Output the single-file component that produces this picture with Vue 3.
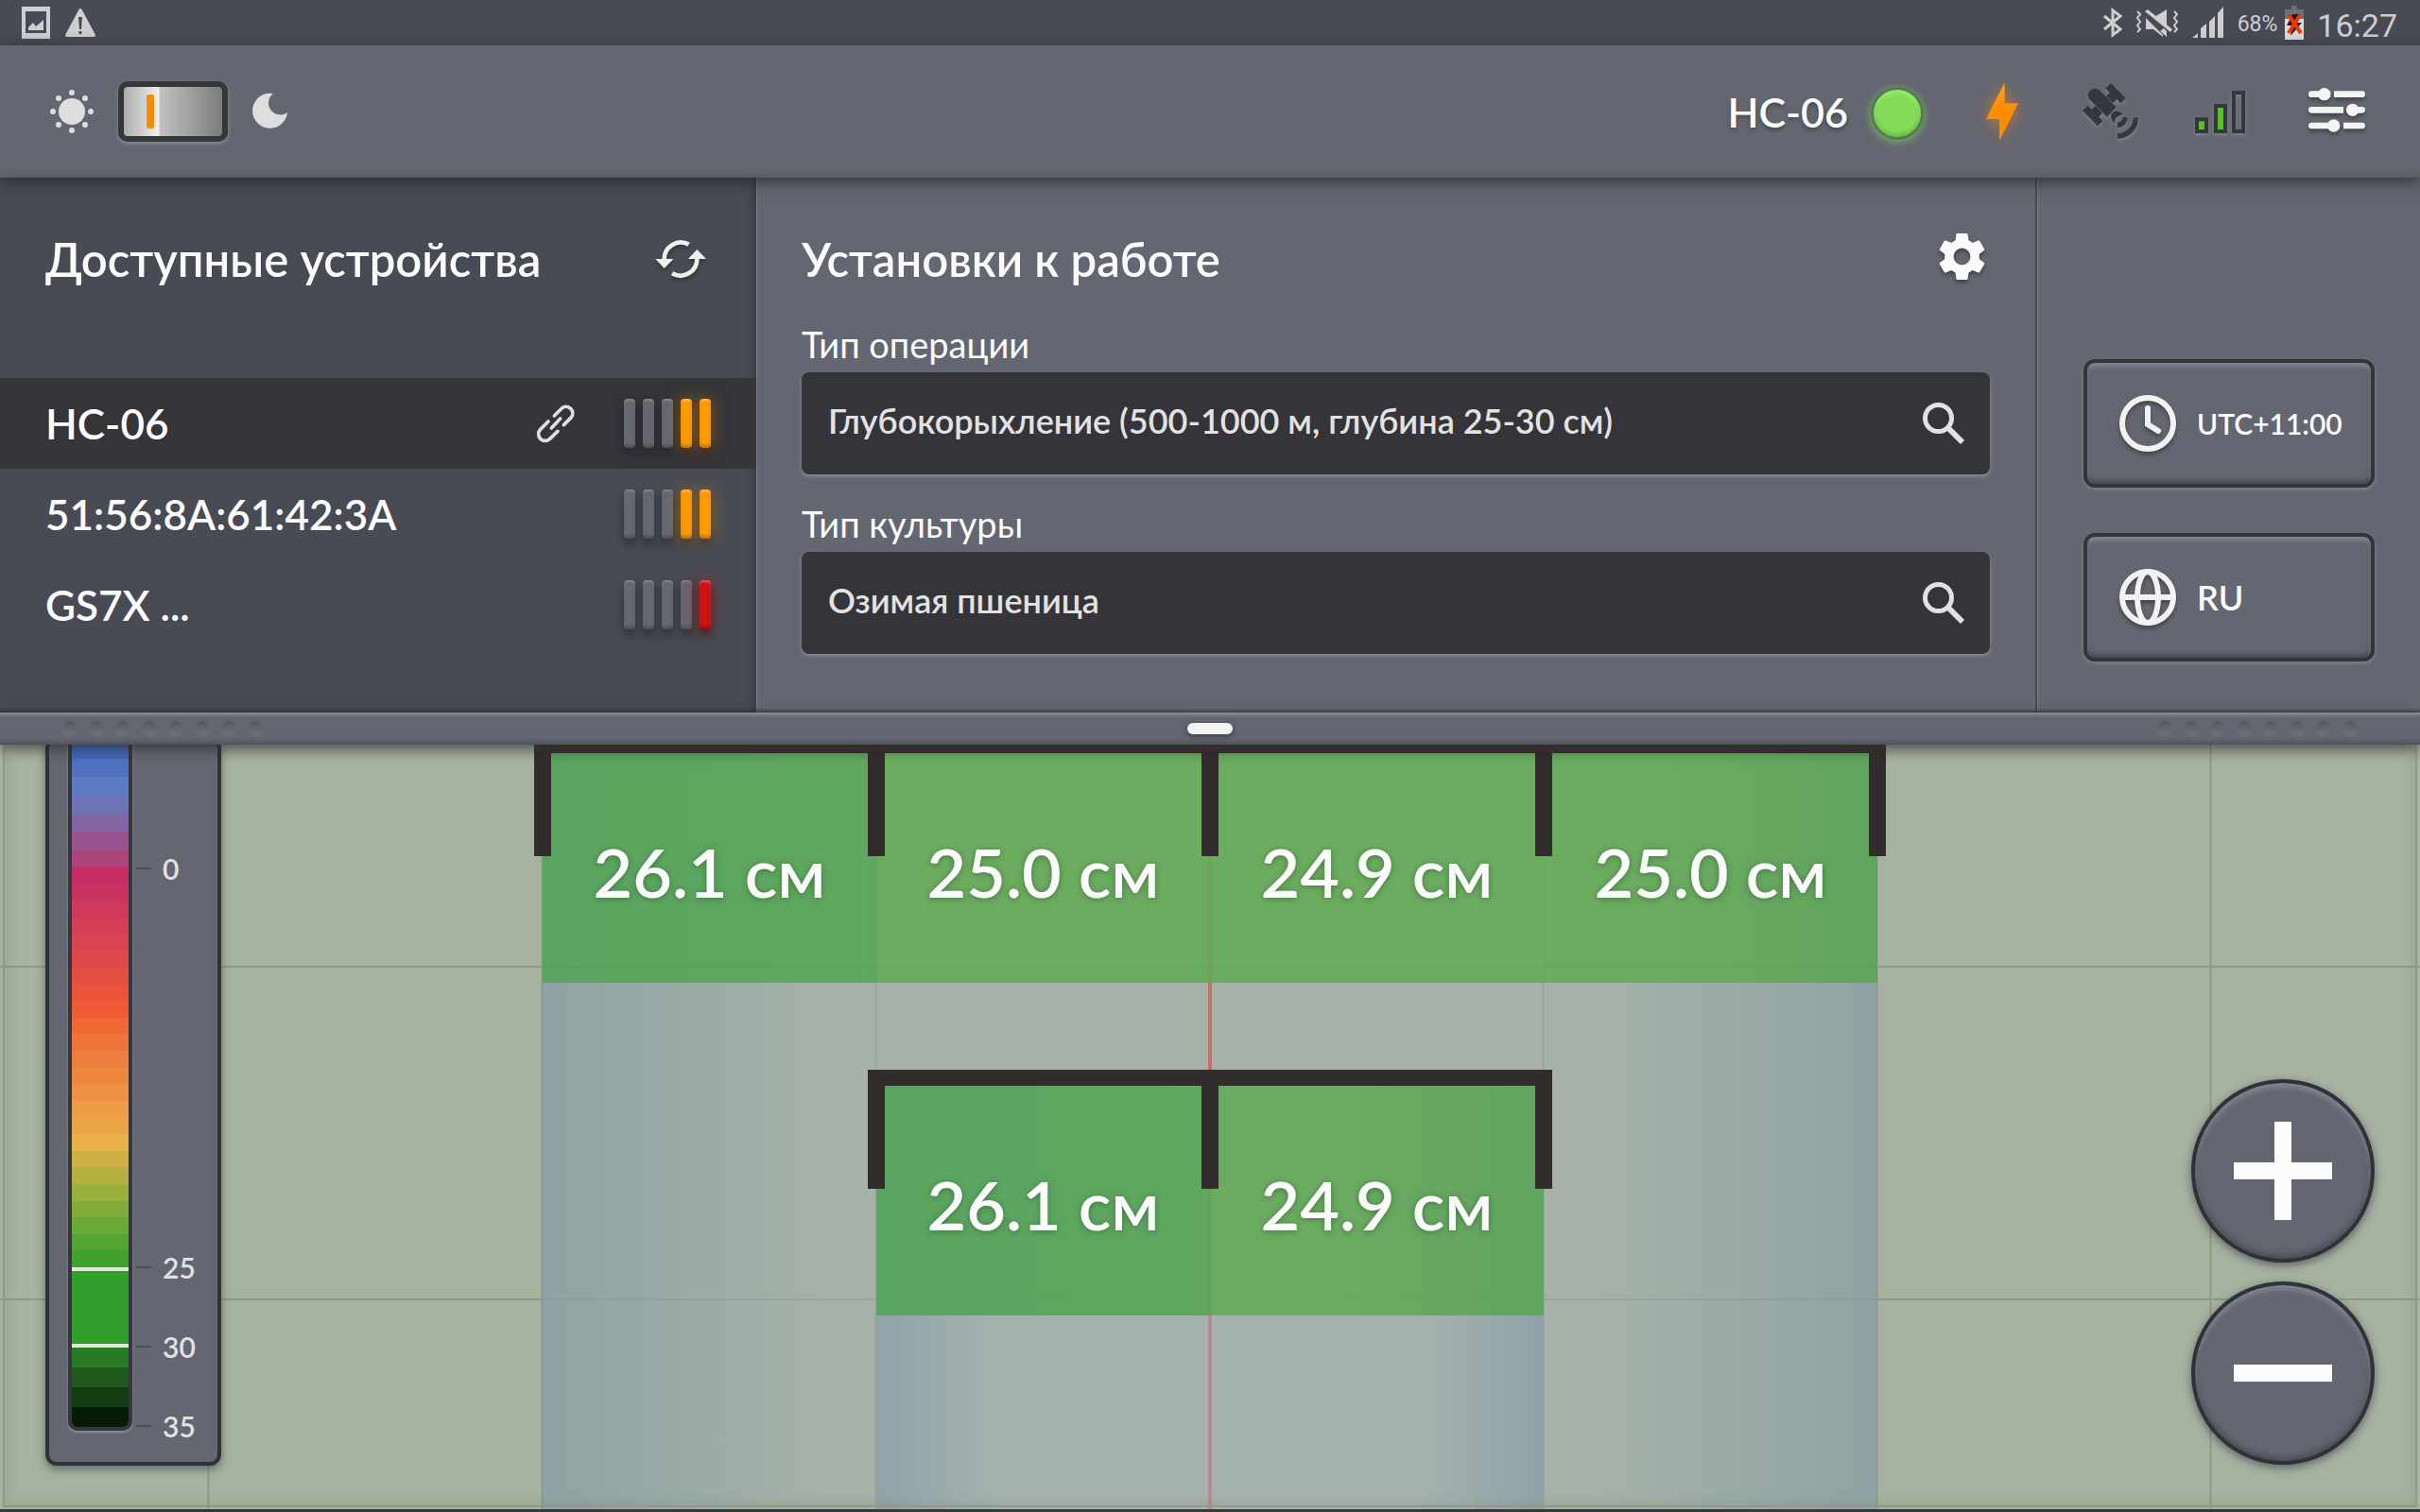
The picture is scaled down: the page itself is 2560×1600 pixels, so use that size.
<script setup>
import { ref } from 'vue'

const night = ref(false)
const operation = ref('Глубокорыхление (500-1000 м, глубина 25-30 см)')
const culture = ref('Озимая пшеница')

const devices = [
  { name: 'HC-06', linked: true, bars: ['', '', '', 'warn', 'warn'] },
  { name: '51:56:8A:61:42:3A', linked: false, bars: ['', '', '', 'warn', 'warn'] },
  { name: 'GS7X ...', linked: false, bars: ['', '', '', '', 'bad'] }
]

const frontRow = [
  { value: '26.1 см', tone: 'deep' },
  { value: '25.0 см', tone: 'norm' },
  { value: '24.9 см', tone: 'norm' },
  { value: '25.0 см', tone: 'edge' }
]
const rearRow = [
  { value: '26.1 см', tone: 'deep' },
  { value: '24.9 см', tone: 'edge' }
]

const above = ['#4467b8', '#5070c2', '#5b7ac3', '#6b74b6', '#8265a4', '#97548f', '#ac4379']
const shallow = [
  '#c62d63', '#ca325f', '#cf395a', '#d53e56', '#da4350', '#e0464a', '#e64d42', '#ec5338',
  '#f25a33', '#f26736', '#f0723a', '#ef7d3d', '#ef883f', '#ec9242', '#ec9d45', '#eaa646',
  '#e9b148', '#cdb144', '#b3b040', '#99af3d', '#81ac3a', '#69a936', '#54a533', '#40a030'
]
const over = ['#277a24', '#1f5a1c', '#133b12', '#051b05']
</script>

<template>
  <div class="app">
    <div class="status">
      <div class="status-group">
        <svg class="ic-shot" viewBox="0 0 30 34"><path fill="#cfcfd1" fill-rule="evenodd" d="M0 0h30v34H0zM4 5v23h22V5z" /><path fill="#cfcfd1" d="M7 25v-3l5-5 3 4 8-7v11z" /></svg>
        <svg class="ic-warn" viewBox="0 0 32 30"><path fill="#cfcfd1" fill-rule="evenodd" d="M14.500 1q1.500-2 3 0L32 28q0 2-2 2H2q-2 0-2-2zM14 9l1 13h2l1-13zM14.500 24v3h3v-3z" /></svg>
      </div>
      <div class="status-group right">
        <svg class="ic-bt" viewBox="0 0 20 30"><path fill="none" stroke="#cfcfd1" stroke-width="3" d="M1 8l17 14-8 6V2l8 6L1 22" /></svg>
        <svg class="ic-mute" viewBox="0 0 46 30"><g fill="#cfcfd1"><path d="M11 10l18 18v2l-10-8h-8z" /><path d="M33 1v19L20 9z" /><path d="M10 3l3-2 26 21-2 3z" /><path d="M26 24l7 6v-6l-3-3z" /></g><path fill="none" stroke="#cfcfd1" stroke-width="2" d="M2 3l3 3-3 4 3 4-3 4 3 4-3 3M41 3l3 3-3 4 3 4-3 4 3 4-3 3" /></svg>
        <svg class="ic-sig" viewBox="0 0 34 34"><path fill="#cfcfd1" d="M0 33l6-5v5zM9 33V23l6-5v15zM18 33V16l6-6v23zM27 33V7l6-7v33z" /></svg>
        <div class="battery">
          <span class="pct">68%</span>
          <svg class="ic-bat" viewBox="0 0 20 36"><path fill="#6f7076" d="M0 4h7V0h6v4h7v12H0z" /><path fill="#dcdcde" d="M0 14h20v22H0z" /><path fill="#1d1d20" d="M8 9h8l-4 9h6L6 32l3-11H2z" /><path stroke="#f23505" stroke-width="4" d="M4 10l13 19M16 10L4 29" /></svg>
        </div>
        <span class="clock">16:27</span>
      </div>
    </div>

    <header class="top">
      <div class="mode">
        <svg class="ic-sun" viewBox="0 0 46 46" fill="#dededf"><circle cx="23" cy="23" r="14" /><circle cx="23" cy="3" r="3" /><circle cx="23" cy="43" r="3" /><circle cx="3" cy="23" r="3" /><circle cx="43" cy="23" r="3" /><circle cx="9" cy="9" r="3" /><circle cx="37" cy="9" r="3" /><circle cx="9" cy="37" r="3" /><circle cx="37" cy="37" r="3" /></svg>
        <input v-model="night" class="switch" type="checkbox" role="switch" aria-label="Ночной режим">
        <svg class="ic-moon" viewBox="0 0 38 38"><path fill="#dededf" d="M22 0A18.500 18.500 0 1 0 37 20A10.500 10.500 0 0 1 22 0Z" /></svg>
      </div>
      <div class="tools">
        <div class="current">HC-06<i class="lamp"></i></div>
        <div class="icons">
          <svg class="hi bolt" viewBox="84 54 180 180"><defs><linearGradient id="gb" x1="0" y1="0" x2="0" y2="1"><stop offset="0" stop-color="#ffa01f" /><stop offset=".5" stop-color="#ff8c00" /></linearGradient></defs><path fill="url(#gb)" d="M182 52v66h43l-60 119v-69h-42z" /></svg>
          <svg class="hi sunk" viewBox="438 54 180 180"><g fill="#36373c"><path d="M450 104Q440 88 454 77Q468 65 482 76L536 130L507 161Z" /><path d="M519 54L566 101L551 118L538 105L526 117L503 96L515 84L502 70Z" /><path d="M445 125L458 138L470 125L492 149L480 161L493 174L477 190L429 142Z" /><path d="M530 143Q547 140 556 152L536 163L528 180Q515 165 521 150Z" /></g><path fill="none" stroke="#36373c" stroke-width="16" d="M564 163A24 24 0 0 1 540 187M598 163A58 58 0 0 1 540 222" /></svg>
          <svg class="hi sunk" viewBox="792 54 180 180"><path fill="#56c222" d="M798 175h18v27h-18zM858 132h18v70h-18z" /><path fill="none" stroke="#36373c" stroke-width="12" d="M792 169h30v38h-30zM852 126h30v81h-30zM909 84h30v123h-30z" /></svg>
          <button class="ibtn" aria-label="Меню"><svg class="hi raised" viewBox="1146 54 180 180"><g fill="#f4f4f4"><path d="M1156 79h60v20h-60a10 10 0 0 1 0-20zM1227 79h89a10 10 0 0 1 0 20h-89zM1156 129h101v20h-101a10 10 0 0 1 0-20zM1286 129h30a10 10 0 0 1 0 20h-30zM1156 179h70v20h-70a10 10 0 0 1 0-20zM1257 179h59a10 10 0 0 1 0 20h-59z" /><circle cx="1196" cy="89" r="20" /><circle cx="1286" cy="139" r="20" /><circle cx="1226" cy="189" r="20" /></g></svg></button>
        </div>
      </div>
    </header>

    <main class="panel">
      <section class="devices">
        <div class="head">
          <h2>Доступные устройства</h2>
          <button class="ibtn" aria-label="Обновить"><svg class="ic-refresh raised" viewBox="396 70 168 124"><g fill="none" stroke="#efefef" stroke-width="14"><path d="M428 134A53 53 0 0 1 506 86" /><path d="M532 130A53 53 0 0 1 453 178" /></g><path fill="#efefef" d="M400 132h57l-29 30zM504 132h57l-29-30z" /></svg></button>
        </div>
        <ul>
          <li v-for="d in devices" :key="d.name" :class="{ active: d.linked }">
            <span class="dname">{{ d.name }}</span>
            <svg v-if="d.linked" class="ic-link" viewBox="24 594 120 120"><path fill="none" stroke="#dfdfe0" stroke-width="11" stroke-linecap="round" d="M79 630L103 606A21 21 0 0 1 133 635L109 659M60 648L35 673A21 21 0 0 0 65 703L90 679M70 669L98 639" /></svg>
            <span class="level"><i v-for="(b, i) in d.bars" :key="i" :class="b"></i></span>
          </li>
        </ul>
      </section>

      <section class="setup">
        <div class="head">
          <h2>Установки к работе</h2>
          <button class="ibtn" aria-label="Настройки"><svg class="ic-gear raised" viewBox="2 2 20 20"><path fill="#fbfbfb" d="M19.140 12.940c.04-.3.06-.61.06-.94 0-.32-.02-.64-.07-.94l2.030-1.580a.49.49 0 0 0 .12-.61l-1.920-3.320a.49.49 0 0 0-.59-.22l-2.390.96c-.5-.38-1.030-.7-1.620-.94l-.36-2.540a.48.48 0 0 0-.48-.41h-3.840c-.24 0-.43.17-.47.41l-.36 2.540c-.59.24-1.130.57-1.620.94l-2.390-.96c-.22-.08-.47 0-.59.22L2.740 8.870c-.12.21-.08.47.12.61l2.030 1.580c-.05.3-.09.63-.09.94s.02.64.07.94l-2.030 1.580a.49.49 0 0 0-.12.61l1.920 3.320c.12.22.37.29.59.22l2.390-.96c.5.38 1.030.7 1.620.94l.36 2.540c.05.24.24.41.48.41h3.840c.24 0 .44-.17.47-.41l.36-2.540c.59-.24 1.130-.56 1.620-.94l2.390.96c.22.08.47 0 .59-.22l1.920-3.320c.12-.22.07-.47-.12-.61zM12 15.500A3.500 3.500 0 1 1 12 8.500a3.500 3.500 0 0 1 0 7z" /></svg></button>
        </div>
        <div class="field">
          <label for="operation">Тип операции</label>
          <div class="box">
            <input id="operation" v-model="operation" type="text">
            <button class="ibtn" aria-label="Найти операцию"><svg class="ic-search" viewBox="0 0 44 44"><g fill="none" stroke="#e2e2e3" stroke-width="5"><circle cx="16.500" cy="16.500" r="14" /><path d="M27 27l15 15" stroke-width="6" /></g></svg></button>
          </div>
        </div>
        <div class="field">
          <label for="culture">Тип культуры</label>
          <div class="box">
            <input id="culture" v-model="culture" type="text">
            <button class="ibtn" aria-label="Найти культуру"><svg class="ic-search" viewBox="0 0 44 44"><g fill="none" stroke="#e2e2e3" stroke-width="5"><circle cx="16.500" cy="16.500" r="14" /><path d="M27 27l15 15" stroke-width="6" /></g></svg></button>
          </div>
        </div>
      </section>

      <section class="locale">
        <button class="key"><svg class="ic-key raised" viewBox="0 0 60 60" fill="none" stroke="#f2f2f2" stroke-width="6"><circle cx="30" cy="30" r="27" /><path d="M30 14v17l11 7" stroke-linecap="round" /></svg><span>UTC+11:00</span></button>
        <button class="key"><svg class="ic-key raised" viewBox="0 0 60 60" fill="none" stroke="#f2f2f2" stroke-width="6"><circle cx="30" cy="30" r="27" /><ellipse cx="30" cy="30" rx="11" ry="27" /><path d="M3 30h54" /></svg><span class="lang">RU</span></button>
      </section>
    </main>

    <div class="drawer">
      <span class="dots"><i v-for="n in 8" :key="n"></i></span>
      <button class="handle" aria-label="Свернуть панель"></button>
      <span class="dots"><i v-for="n in 8" :key="n"></i></span>
    </div>

    <div class="map">
      <div class="trail wide"></div>
      <div class="axis"></div>
      <div class="trail narrow"></div>
      <div class="tool front">
        <div v-for="(c, i) in frontRow" :key="i" class="cell" :class="c.tone"><b>{{ c.value }}</b></div>
      </div>
      <div class="tool rear">
        <div v-for="(c, i) in rearRow" :key="i" class="cell" :class="c.tone"><b>{{ c.value }}</b></div>
      </div>

      <aside class="legend">
        <div class="scale">
          <div class="band above"><i v-for="c in above" :key="c" :style="{ background: c }"></i></div>
          <div class="band shallow"><i v-for="c in shallow" :key="c" :style="{ background: c }"></i></div>
          <div class="band target"></div>
          <div class="band over"><i v-for="c in over" :key="c" :style="{ background: c }"></i></div>
        </div>
        <div class="marks">
          <span class="zero">0</span><span>25</span><span>30</span><span>35</span>
        </div>
      </aside>

      <div class="zoom">
        <button aria-label="Приблизить"><svg viewBox="0 0 104 104"><path fill="#fcfcfc" d="M43 0h18v43h43v18H61v43H43V61H0V43h43z" /></svg></button>
        <button aria-label="Отдалить"><svg viewBox="0 0 104 104"><path fill="#fcfcfc" d="M0 43h104v18H0z" /></svg></button>
      </div>
    </div>
  </div>
</template>

<style>
body {
  margin: 0;
  background: #484b53;
}
</style>

<style scoped>
.app {
  display: flex;
  flex-direction: column;
  min-height: 100vh;
  background: #484b53;
  color: #fcfcfc;
  font-family: Lato, "Noto Sans", sans-serif;
  font-weight: 600;
}
.app * {
  box-sizing: border-box;
}
svg {
  display: block;
  flex: none;
  overflow: visible;
}
button,
input {
  font: inherit;
  color: inherit;
  border: 0;
  background: none;
  padding: 0;
  margin: 0;
}
.ibtn {
  flex: none;
}
.raised {
  filter: drop-shadow(0 3px 2px rgba(30, 31, 36, 0.5));
}

.status {
  display: flex;
  justify-content: space-between;
  height: 48px;
  padding: 0 24px 0 23px;
  background: #484b53;
  color: #cfcfd1;
  font-family: Roboto, sans-serif;
  font-weight: 400;
}
.status-group {
  display: flex;
  align-items: center;
  gap: 16px;
}
.status-group.right {
  gap: 14px;
}
.battery {
  display: flex;
  align-items: center;
  gap: 8px;
}
.ic-shot { width: 30px; height: 34px; }
.ic-warn { width: 32px; height: 30px; }
.ic-bt { width: 20px; height: 30px; }
.ic-mute { width: 46px; height: 30px; }
.ic-sig { width: 34px; height: 34px; }
.ic-bat { width: 20px; height: 36px; }
.pct {
  font-size: 23px;
  padding-top: 3px;
}
.clock {
  font-size: 34px;
  padding-top: 6px;
}

.top {
  display: flex;
  justify-content: space-between;
  align-items: center;
  height: 140px;
  padding: 0 58px 0 53px;
  background: linear-gradient(#646671 132px, #5a5c66);
  box-shadow: 0 4px 16px rgba(36, 37, 40, 0.8);
  position: relative;
  z-index: 2;
}
.mode {
  display: flex;
  align-items: center;
  gap: 26px;
}
.ic-sun { width: 46px; height: 46px; }
.ic-moon { width: 38px; height: 38px; }
.switch {
  appearance: none;
  display: flex;
  align-items: center;
  width: 116px;
  height: 64px;
  padding-left: 24px;
  border: 6px solid #36373c;
  border-radius: 10px;
  background: linear-gradient(90deg, #acacac, #efefef 37px, #c2c2c2 38px, #7c7c7c 100%);
  box-shadow: 0 2px 4px rgba(150, 152, 166, 0.8);
}
.switch::before {
  content: "";
  width: 8px;
  height: 36px;
  border-radius: 2px;
  background: #ff8a00;
}
.tools {
  display: flex;
  align-items: center;
  gap: 53px;
}
.current {
  display: flex;
  align-items: center;
  gap: 24px;
  font-size: 43px;
  text-shadow: 0 3px 4px rgba(40, 41, 48, 0.5);
}
.lamp {
  width: 56px;
  height: 56px;
  margin-top: 4px;
  border: 3px solid #567a52;
  border-radius: 50%;
  background: #82dc57;
  box-shadow: 0 2px 10px rgba(130, 220, 100, 0.7), inset 0 3px 4px rgba(170, 245, 130, 0.7), inset 0 -2px 4px rgba(70, 150, 40, 0.6);
}
.icons {
  display: flex;
  gap: 58px;
}
.hi {
  width: 60px;
  height: 60px;
}
.bolt {
  filter: drop-shadow(0 0 8px rgba(255, 140, 0, 0.6));
}
.sunk {
  filter: drop-shadow(0 2px 2px rgba(150, 152, 166, 0.6));
}

.panel {
  display: grid;
  grid-template-columns: minmax(0, 800fr) minmax(0, 1355fr) minmax(0, 405fr);
  min-height: 566px;
  background: #646671;
}
.head {
  display: flex;
  justify-content: space-between;
  align-items: center;
  height: 64px;
}
h2 {
  margin: 0;
  font-size: 49px;
  line-height: 64px;
  font-weight: 600;
}
.devices {
  padding-top: 54px;
  background: #484b53;
  box-shadow: inset -6px 0 8px -4px rgba(40, 41, 46, 0.6);
}
.devices .head {
  padding: 0 52px 0 48px;
  margin-bottom: 94px;
}
.ic-refresh { width: 56px; height: 42px; }
ul {
  list-style: none;
  margin: 0;
  padding: 0;
}
li {
  display: flex;
  align-items: center;
  height: 96px;
  padding: 0 48px;
  font-size: 44px;
}
li.active {
  background: #343439;
}
.dname { flex: 1; }
.ic-link {
  width: 40px;
  height: 40px;
  margin-right: 52px;
}
.level {
  display: flex;
  gap: 8px;
}
.level i {
  width: 12px;
  height: 52px;
  border-radius: 4px;
  background: #656772;
  box-shadow: 0 6px 10px rgba(30, 30, 34, 0.6), inset 0 2px 2px rgba(255, 255, 255, 0.2), inset 0 -3px 3px rgba(0, 0, 0, 0.2);
}
.level .warn {
  background: #ff9a00;
  box-shadow: 0 0 18px rgba(255, 154, 0, 0.5), 0 6px 8px rgba(40, 25, 0, 0.5), inset 0 2px 2px rgba(255, 255, 255, 0.3), inset 0 -3px 3px rgba(120, 60, 0, 0.4);
}
.level .bad {
  background: #d01013;
  box-shadow: 0 0 18px rgba(208, 16, 19, 0.6), 0 6px 8px rgba(40, 0, 0, 0.5), inset 0 2px 2px rgba(255, 255, 255, 0.3), inset 0 -3px 3px rgba(80, 0, 0, 0.4);
}

.setup {
  padding: 54px 48px 0 47px;
  border-left: 1px solid #7a7c87;
  border-right: 2px solid #45474f;
}
.setup .head {
  margin-bottom: 34px;
  padding-right: 4px;
}
.ic-gear {
  width: 51px;
  height: 51px;
  margin-bottom: 5px;
}
.field {
  margin-bottom: 28px;
}
label {
  display: block;
  margin-bottom: 6px;
  font-size: 38px;
  line-height: 48px;
  font-weight: 400;
}
.box {
  display: flex;
  align-items: center;
  height: 108px;
  padding: 0 27px 0 28px;
  border-radius: 8px;
  background: #343439;
  box-shadow: 0 2px 4px rgba(150, 152, 166, 0.8);
}
.box input {
  flex: 1;
  min-width: 0;
  padding-bottom: 6px;
  font-size: 36px;
  color: #e2e2e3;
}
.ic-search { width: 44px; height: 44px; }

.locale {
  display: flex;
  flex-direction: column;
  justify-content: flex-end;
  gap: 48px;
  padding: 0 48px 54px;
  border-left: 1px solid #7a7c87;
}
.key {
  display: flex;
  align-items: center;
  gap: 22px;
  height: 136px;
  padding: 0 32px 0 34px;
  border: 4px solid #343439;
  border-radius: 12px;
  font-size: 30px;
  box-shadow: 0 2px 4px rgba(150, 152, 166, 0.6), inset 0 4px 4px rgba(150, 150, 168, 0.6), inset 0 -4px 5px rgba(50, 52, 60, 0.5);
}
.ic-key { width: 60px; height: 60px; }
.lang { font-size: 36px; }

.drawer {
  display: flex;
  justify-content: space-between;
  align-items: center;
  height: 34px;
  padding: 0 66px;
  background: linear-gradient(#8d8f99, #646671 5px, #646671 27px, #50525b);
  box-shadow: 0 -2px 3px rgba(40, 41, 46, 0.7), 0 6px 14px rgba(40, 41, 40, 0.6);
  position: relative;
  z-index: 2;
}
.dots {
  display: flex;
  gap: 12px;
}
.dots i {
  width: 16px;
  height: 16px;
  border-radius: 50%;
  background: linear-gradient(#555761, #70727d);
}
.handle {
  width: 48px;
  height: 12px;
  border-radius: 6px;
  background: #f2f2f2;
  box-shadow: 0 2px 6px rgba(30, 30, 36, 0.6);
}

/* Field canvas: 353 x 352 grid centred on the machine axis */
.map {
  flex: 1;
  position: relative;
  overflow: hidden;
  min-height: 812px;
  border-bottom: 3px solid #36393f;
  background:
    linear-gradient(90deg, #8e9b80 2px, transparent 2px) calc(50% + 175px) 0 / 353px 100%,
    linear-gradient(#8e9b80 2px, transparent 2px) 0 234px / 100% 352px,
    #a7b2a0;
}
.map::after {
  content: "";
  position: absolute;
  inset: 0 3px 2px;
  border: solid #8e9b80;
  border-width: 0 2px 2px;
  box-shadow: inset 0 0 14px rgba(110, 125, 105, 0.3);
  pointer-events: none;
}
.axis {
  position: absolute;
  inset: 0 auto 0 50%;
  width: 4px;
  margin-left: -2px;
  background: #c56d6e;
}
.tool {
  position: absolute;
  left: 50%;
  display: flex;
  height: 260px;
  transform: translateX(-50%);
}
.front { top: -8px; }
.rear { top: 344px; }
.cell {
  position: relative;
  display: flex;
  justify-content: center;
  width: 353px;
  padding-top: 83px;
  border-top: 17px solid #322d2d;
}
.cell::before,
.cell:last-child::after {
  content: "";
  position: absolute;
  left: -9px;
  top: -17px;
  width: 18px;
  height: 126px;
  background: #322d2d;
  z-index: 1;
}
.cell:last-child::after {
  left: auto;
  right: -9px;
}
.cell b {
  font-size: 72px;
  line-height: 84px;
  font-weight: 600;
  text-shadow: 0 1px 6px rgba(30, 70, 30, 0.5);
}
.deep { background: linear-gradient(90deg, rgba(76, 162, 84, 0.85), rgba(84, 166, 84, 0.85)); }
.norm { background: rgba(97, 170, 85, 0.85); }
.edge { background: linear-gradient(90deg, rgba(97, 170, 85, 0.85) 35%, rgba(85, 162, 84, 0.85)); }
.trail {
  position: absolute;
  left: 50%;
  bottom: 0;
  transform: translateX(-50%);
}
.wide {
  top: 252px;
  width: 1412px;
  background: linear-gradient(90deg, rgba(134, 158, 166, 0.75), rgba(165, 177, 177, 0.5) 21%, rgba(165, 177, 177, 0.5) 79%, rgba(134, 158, 166, 0.75));
}
.narrow {
  top: 604px;
  width: 706px;
  background: linear-gradient(90deg, rgba(132, 155, 171, 0.65), rgba(162, 179, 182, 0.45) 18%, rgba(162, 179, 182, 0.45) 82%, rgba(132, 155, 171, 0.65));
}

.legend {
  position: absolute;
  left: 48px;
  top: -8px;
  z-index: 1;
  display: flex;
  align-items: flex-start;
  gap: 4px;
  width: 186px;
  padding: 0 20px 20px;
  border: 4px solid #313237;
  border-radius: 12px;
  background: #646671;
  box-shadow: 0 4px 10px rgba(60, 64, 70, 0.6);
}
.scale {
  width: 68px;
  border: 4px solid #36373c;
  border-top: 0;
  border-radius: 0 0 10px 10px;
  overflow: hidden;
  box-shadow: 0 2px 3px rgba(160, 162, 175, 0.7);
}
.band {
  display: flex;
  flex-direction: column;
}
.band i { flex: 1; }
.above { height: 134px; }
.shallow { height: 423px; }
.target {
  height: 85px;
  border: solid #e4e6e0;
  border-width: 4px 0;
  background: #329f2d;
}
.over { height: 84px; }
.marks {
  display: flex;
  flex-direction: column;
  font-size: 30px;
  line-height: 32px;
  color: #e2e2e3;
}
.marks span {
  display: flex;
  align-items: center;
  gap: 12px;
  margin-bottom: 52px;
}
.marks span::before {
  content: "";
  width: 16px;
  height: 2px;
  background: #4d4f58;
}
.marks .zero {
  margin: 119px 0 390px;
}
.marks span:last-child { margin-bottom: 2px; }

.zoom {
  position: absolute;
  right: 48px;
  bottom: 47px;
  z-index: 1;
  display: flex;
  flex-direction: column;
  gap: 20px;
}
.zoom button {
  display: flex;
  align-items: center;
  justify-content: center;
  width: 194px;
  height: 194px;
  border: 4px solid #313237;
  border-radius: 50%;
  background: #646671;
  box-shadow: 0 3px 10px rgba(60, 64, 80, 0.7), inset 0 5px 5px rgba(150, 150, 168, 0.6), inset 0 -4px 6px rgba(50, 52, 60, 0.5);
}
.zoom svg {
  width: 104px;
  height: 104px;
}
</style>
